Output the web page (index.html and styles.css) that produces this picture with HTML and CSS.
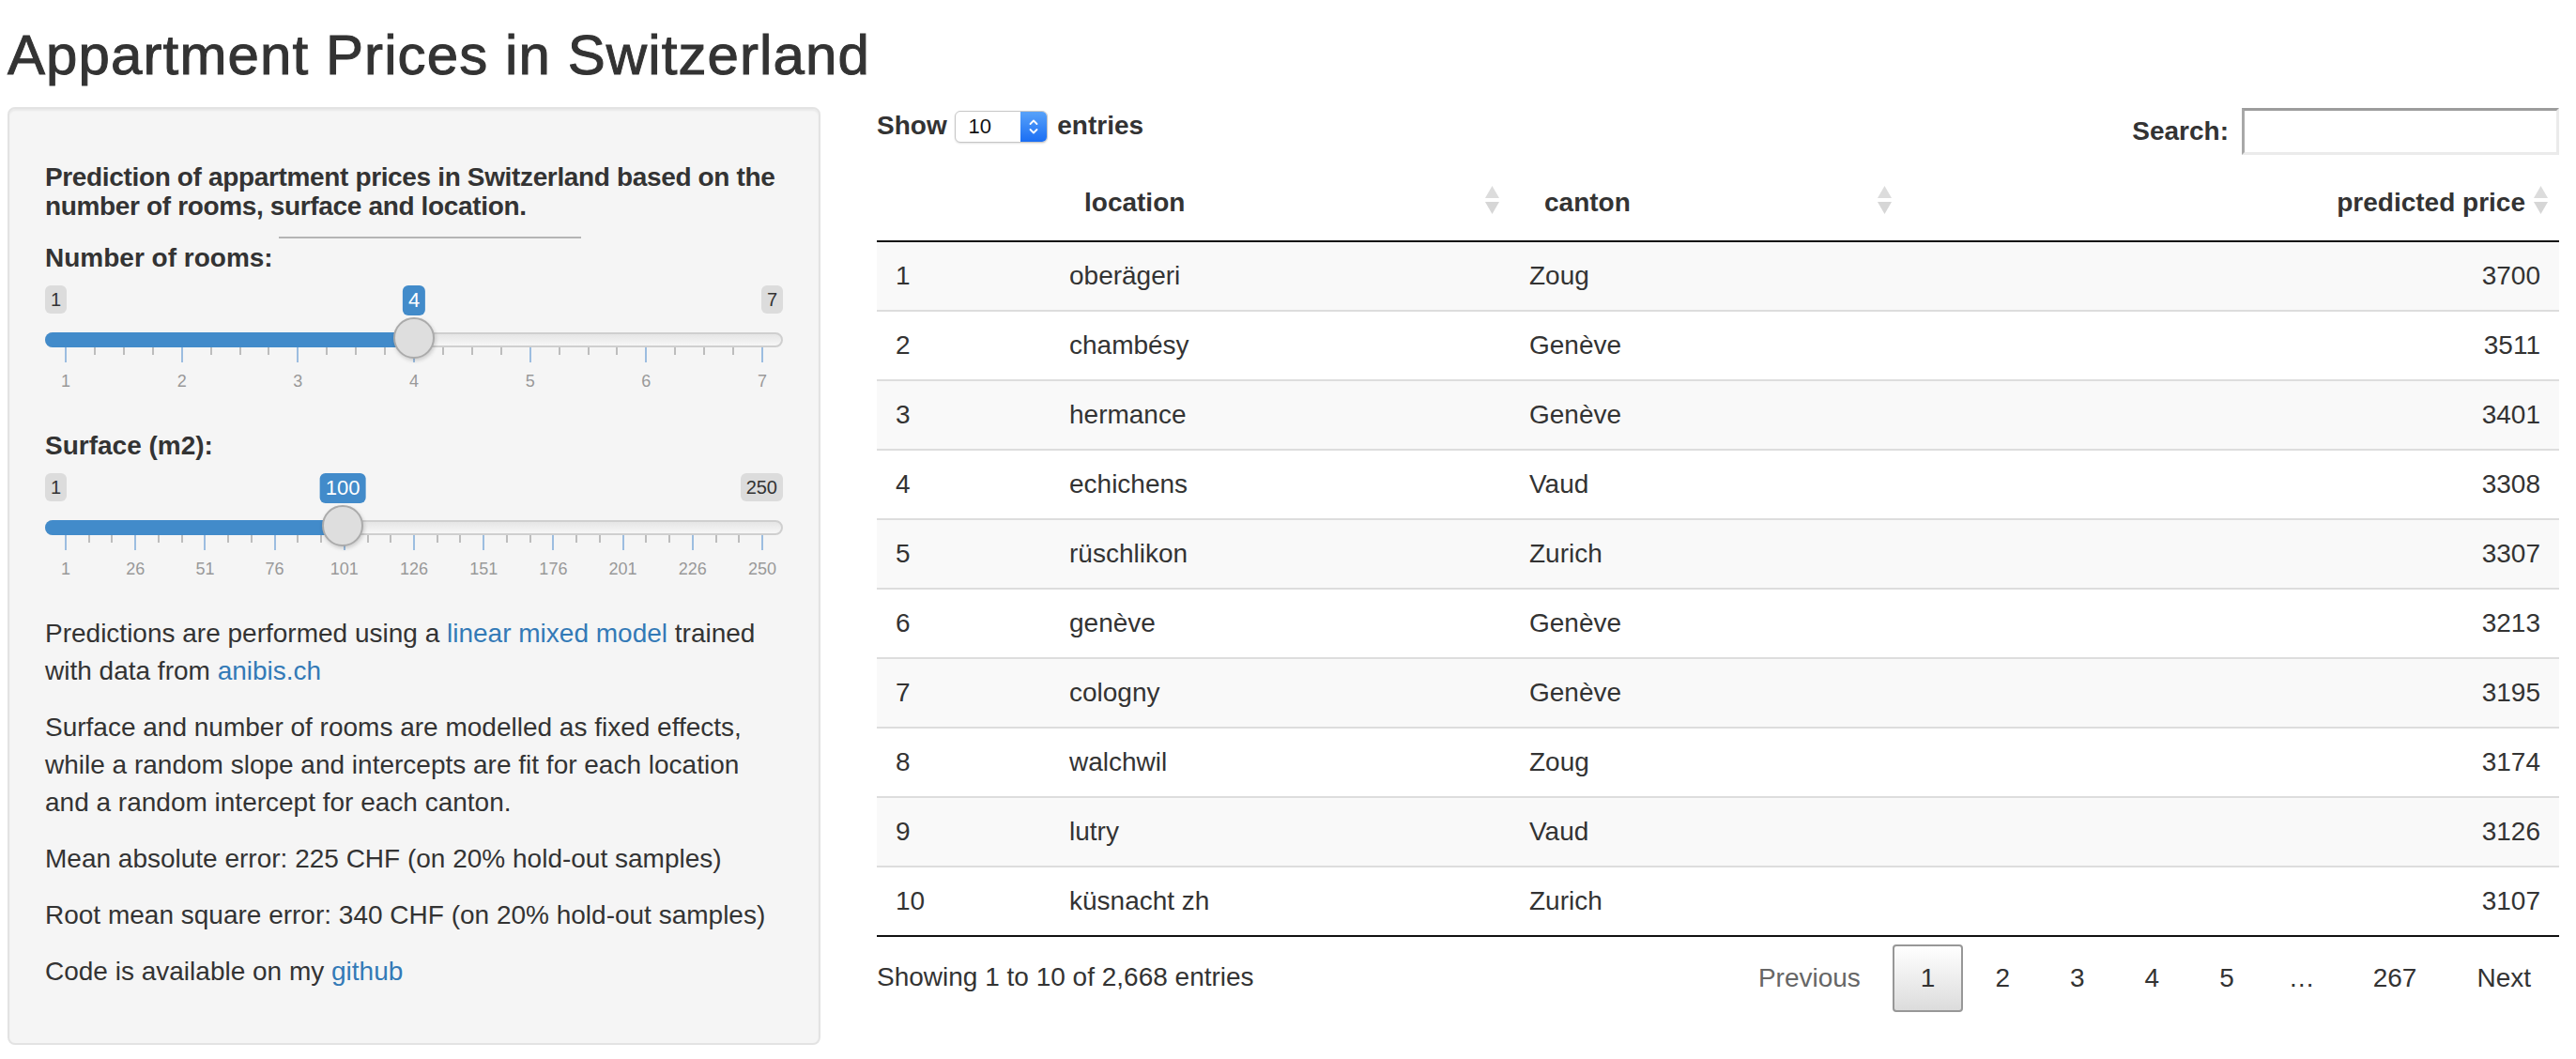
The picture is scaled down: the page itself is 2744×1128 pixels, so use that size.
FILE: index.html
```html
<!DOCTYPE html>
<html lang="en">
<head>
<meta charset="utf-8">
<title>Appartment Prices in Switzerland</title>
<link rel="stylesheet" href="styles.css">
</head>
<body>
<div class="page">
  <h2 class="title">Appartment Prices in Switzerland</h2>
  <div class="layout">
    <aside class="well">
      <h5 class="intro">Prediction of appartment prices in Switzerland based on the number of rooms, surface and location.</h5>
      <hr class="sep">

      <div class="form-group">
        <label class="control-label">Number of rooms:</label>
        <div class="irs" style="--p:0.5">
          <span class="irs-line"></span>
          <span class="irs-bar"></span>
          <span class="irs-min">1</span>
          <span class="irs-max">7</span>
          <span class="irs-single">4</span>
          <div class="irs-grid">
            <span class="tick" style="left:0%"></span>
            <span class="tick small" style="left:4.1667%"></span>
            <span class="tick small" style="left:8.3333%"></span>
            <span class="tick small" style="left:12.5%"></span>
            <span class="tick" style="left:16.6667%"></span>
            <span class="tick small" style="left:20.8333%"></span>
            <span class="tick small" style="left:25%"></span>
            <span class="tick small" style="left:29.1667%"></span>
            <span class="tick" style="left:33.3333%"></span>
            <span class="tick small" style="left:37.5%"></span>
            <span class="tick small" style="left:41.6667%"></span>
            <span class="tick small" style="left:45.8333%"></span>
            <span class="tick" style="left:50%"></span>
            <span class="tick small" style="left:54.1667%"></span>
            <span class="tick small" style="left:58.3333%"></span>
            <span class="tick small" style="left:62.5%"></span>
            <span class="tick" style="left:66.6667%"></span>
            <span class="tick small" style="left:70.8333%"></span>
            <span class="tick small" style="left:75%"></span>
            <span class="tick small" style="left:79.1667%"></span>
            <span class="tick" style="left:83.3333%"></span>
            <span class="tick small" style="left:87.5%"></span>
            <span class="tick small" style="left:91.6667%"></span>
            <span class="tick small" style="left:95.8333%"></span>
            <span class="tick" style="left:100%"></span>
            <span class="grid-text" style="left:0%">1</span>
            <span class="grid-text" style="left:16.6667%">2</span>
            <span class="grid-text" style="left:33.3333%">3</span>
            <span class="grid-text" style="left:50%">4</span>
            <span class="grid-text" style="left:66.6667%">5</span>
            <span class="grid-text" style="left:83.3333%">6</span>
            <span class="grid-text" style="left:100%">7</span>
          </div>
          <span class="irs-handle"></span>
        </div>
      </div>

      <div class="form-group">
        <label class="control-label">Surface (m2):</label>
        <div class="irs" style="--p:0.3976">
          <span class="irs-line"></span>
          <span class="irs-bar"></span>
          <span class="irs-min">1</span>
          <span class="irs-max">250</span>
          <span class="irs-single">100</span>
          <div class="irs-grid">
            <span class="tick" style="left:0%"></span>
            <span class="tick small" style="left:3.3333%"></span>
            <span class="tick small" style="left:6.6667%"></span>
            <span class="tick" style="left:10%"></span>
            <span class="tick small" style="left:13.3333%"></span>
            <span class="tick small" style="left:16.6667%"></span>
            <span class="tick" style="left:20%"></span>
            <span class="tick small" style="left:23.3333%"></span>
            <span class="tick small" style="left:26.6667%"></span>
            <span class="tick" style="left:30%"></span>
            <span class="tick small" style="left:33.3333%"></span>
            <span class="tick small" style="left:36.6667%"></span>
            <span class="tick" style="left:40%"></span>
            <span class="tick small" style="left:43.3333%"></span>
            <span class="tick small" style="left:46.6667%"></span>
            <span class="tick" style="left:50%"></span>
            <span class="tick small" style="left:53.3333%"></span>
            <span class="tick small" style="left:56.6667%"></span>
            <span class="tick" style="left:60%"></span>
            <span class="tick small" style="left:63.3333%"></span>
            <span class="tick small" style="left:66.6667%"></span>
            <span class="tick" style="left:70%"></span>
            <span class="tick small" style="left:73.3333%"></span>
            <span class="tick small" style="left:76.6667%"></span>
            <span class="tick" style="left:80%"></span>
            <span class="tick small" style="left:83.3333%"></span>
            <span class="tick small" style="left:86.6667%"></span>
            <span class="tick" style="left:90%"></span>
            <span class="tick small" style="left:93.3333%"></span>
            <span class="tick small" style="left:96.6667%"></span>
            <span class="tick" style="left:100%"></span>
            <span class="grid-text" style="left:0%">1</span>
            <span class="grid-text" style="left:10%">26</span>
            <span class="grid-text" style="left:20%">51</span>
            <span class="grid-text" style="left:30%">76</span>
            <span class="grid-text" style="left:40%">101</span>
            <span class="grid-text" style="left:50%">126</span>
            <span class="grid-text" style="left:60%">151</span>
            <span class="grid-text" style="left:70%">176</span>
            <span class="grid-text" style="left:80%">201</span>
            <span class="grid-text" style="left:90%">226</span>
            <span class="grid-text" style="left:100%">250</span>
          </div>
          <span class="irs-handle"></span>
        </div>
      </div>

      <p>Predictions are performed using a <a href="#">linear mixed model</a> trained with data from <a href="#">anibis.ch</a></p>
      <p>Surface and number of rooms are modelled as fixed effects, while a random slope and intercepts are fit for each location and a random intercept for each canton.</p>
      <p>Mean absolute error: 225 CHF (on 20% hold-out samples)</p>
      <p>Root mean square error: 340 CHF (on 20% hold-out samples)</p>
      <p>Code is available on my <a href="#">github</a></p>
    </aside>

    <main class="main">
      <div class="dt-top">
        <div class="dt-length">Show <span class="select"><span class="select-val">10</span><span class="select-btn"><svg width="12" height="24" viewBox="0 0 12 24"><path d="M2.5 9 L6 5.5 L9.5 9" fill="none" stroke="#fff" stroke-width="1.8" stroke-linecap="round" stroke-linejoin="round"/><path d="M2.5 15 L6 18.5 L9.5 15" fill="none" stroke="#fff" stroke-width="1.8" stroke-linecap="round" stroke-linejoin="round"/></svg></span></span> entries</div>
        <div class="dt-filter"><span>Search:</span><span class="search-input"></span></div>
      </div>

      <table class="dt">
        <colgroup>
          <col class="c-idx">
          <col class="c-loc">
          <col class="c-canton">
          <col class="c-price">
        </colgroup>
        <thead>
          <tr>
            <th></th>
            <th>location<span class="sort-icon"><svg width="15" height="30" viewBox="0 0 15 30"><path d="M7.5 0 L15 13 L0 13 Z" fill="#dcdcdc"/><path d="M0 17 L15 17 L7.5 30 Z" fill="#d6d6d6"/></svg></span></th>
            <th>canton<span class="sort-icon"><svg width="15" height="30" viewBox="0 0 15 30"><path d="M7.5 0 L15 13 L0 13 Z" fill="#dcdcdc"/><path d="M0 17 L15 17 L7.5 30 Z" fill="#d6d6d6"/></svg></span></th>
            <th class="num">predicted price<span class="sort-icon"><svg width="15" height="30" viewBox="0 0 15 30"><path d="M7.5 0 L15 13 L0 13 Z" fill="#dcdcdc"/><path d="M0 17 L15 17 L7.5 30 Z" fill="#d6d6d6"/></svg></span></th>
          </tr>
        </thead>
        <tbody>
          <tr><td>1</td><td>oberägeri</td><td>Zoug</td><td class="num">3700</td></tr>
          <tr><td>2</td><td>chambésy</td><td>Genève</td><td class="num">3511</td></tr>
          <tr><td>3</td><td>hermance</td><td>Genève</td><td class="num">3401</td></tr>
          <tr><td>4</td><td>echichens</td><td>Vaud</td><td class="num">3308</td></tr>
          <tr><td>5</td><td>rüschlikon</td><td>Zurich</td><td class="num">3307</td></tr>
          <tr><td>6</td><td>genève</td><td>Genève</td><td class="num">3213</td></tr>
          <tr><td>7</td><td>cologny</td><td>Genève</td><td class="num">3195</td></tr>
          <tr><td>8</td><td>walchwil</td><td>Zoug</td><td class="num">3174</td></tr>
          <tr><td>9</td><td>lutry</td><td>Vaud</td><td class="num">3126</td></tr>
          <tr><td>10</td><td>küsnacht zh</td><td>Zurich</td><td class="num">3107</td></tr>
        </tbody>
      </table>

      <div class="dt-bottom">
        <div class="dt-info">Showing 1 to 10 of 2,668 entries</div>
        <div class="dt-paginate">
          <a class="pg disabled">Previous</a>
          <a class="pg current">1</a>
          <a class="pg">2</a>
          <a class="pg">3</a>
          <a class="pg">4</a>
          <a class="pg">5</a>
          <span class="ellipsis">…</span>
          <a class="pg">267</a>
          <a class="pg">Next</a>
        </div>
      </div>
    </main>
  </div>
</div>
</body>
</html>
```

FILE: styles.css
```css
* {
  box-sizing: border-box;
}

body {
  margin: 0;
  background: #fff;
  color: #333;
  font-family: "Liberation Sans", Arial, Helvetica, sans-serif;
  font-size: 28px;
  line-height: 40px;
}

a {
  color: #337ab7;
  text-decoration: none;
}

.page {
  padding: 0 0 0 8px;
}

.title {
  margin: 26px 0 22px;
  font-size: 60px;
  line-height: 66px;
  font-weight: 400;
  letter-spacing: 1.1px;
  -webkit-text-stroke: 1px #333;
  color: #333;
}

.layout {
  display: grid;
  grid-template-columns: 866px 1792px;
  column-gap: 60px;
  align-items: start;
}

/* ---------- sidebar ---------- */
.well {
  background: #f5f5f5;
  border: 2px solid #e3e3e3;
  border-radius: 8px;
  box-shadow: inset 0 2px 2px rgba(0, 0, 0, 0.05);
  padding: 38px;
}

.intro {
  margin: 20px 0 0;
  font-size: 28px;
  line-height: 30.8px;
  font-weight: 700;
  letter-spacing: -0.35px;
}

.sep {
  margin: 16px 0 1px 249px;
  width: 322px;
  height: 0;
  border: 0;
  border-top: 2px solid #b5b5b5;
}

.form-group {
  margin-bottom: 30px;
}

.control-label {
  display: block;
  font-weight: 700;
  line-height: 40px;
  margin-bottom: 9px;
}

.irs {
  position: relative;
  height: 121px;
}

.irs-line {
  position: absolute;
  left: 0;
  right: 0;
  top: 50px;
  height: 16px;
  border: 2px solid #cfcfcf;
  border-radius: 16px;
  background: linear-gradient(to bottom, #dddddd -50%, #ffffff 150%);
}

.irs-bar {
  position: absolute;
  left: 0;
  top: 50px;
  height: 16px;
  width: calc(22px + var(--p) * (100% - 44px));
  background: #428bca;
  border-radius: 16px 0 0 16px;
}

.irs-min,
.irs-max {
  position: absolute;
  top: 0;
  padding: 2px 6px;
  font-size: 20px;
  line-height: 26px;
  color: #333;
  background: rgba(0, 0, 0, 0.1);
  border-radius: 6px;
}

.irs-min {
  left: 0;
}

.irs-max {
  right: 0;
}

.irs-single {
  position: absolute;
  top: 0;
  left: calc(22px + var(--p) * (100% - 44px));
  transform: translateX(-50%);
  padding: 2px 6px;
  font-size: 22px;
  line-height: 28px;
  color: #fff;
  background: #428bca;
  border-radius: 6px;
}

.irs-handle {
  position: absolute;
  top: 34px;
  left: calc(22px + var(--p) * (100% - 44px));
  width: 44px;
  height: 44px;
  margin-left: -22px;
  background: #dedede;
  border: 2px solid #ababab;
  border-radius: 50%;
  box-shadow: 1px 2px 4px rgba(0, 0, 0, 0.18);
}

.irs-grid {
  position: absolute;
  left: 22px;
  right: 22px;
  top: 66px;
  height: 55px;
}

.tick {
  position: absolute;
  top: 0;
  width: 2px;
  height: 16px;
  margin-left: -1px;
  background: #9cbde0;
}

.tick.small {
  height: 8px;
  background: #bdbdbd;
}

.grid-text {
  position: absolute;
  top: 24px;
  transform: translateX(-50%);
  font-size: 18px;
  line-height: 24px;
  color: #999;
}

.well p {
  margin: 0 0 20px;
}

.well p:last-child {
  margin-bottom: 18px;
}

/* ---------- main panel ---------- */
.main {
  min-width: 0;
}

.dt-top {
  display: flex;
  justify-content: space-between;
  align-items: flex-start;
  height: 51px;
}

.dt-length {
  font-weight: 700;
  line-height: 40px;
}

.select {
  display: inline-flex;
  vertical-align: middle;
  width: 99px;
  height: 34px;
  margin: -2px 2px 0 1px;
  background: #fff;
  border: 1px solid #c6c6c6;
  border-radius: 6px;
  box-shadow: 0 1px 2px rgba(0, 0, 0, 0.12);
  overflow: hidden;
  font-weight: 400;
}

.select-val {
  flex: 1;
  padding-left: 13px;
  font-size: 22px;
  line-height: 32px;
  color: #111;
}

.select-btn {
  width: 28px;
  display: flex;
  align-items: center;
  justify-content: center;
  background: linear-gradient(to bottom, #58a2f9, #1a6ef4);
}

.select-btn svg {
  display: block;
}

.dt-filter {
  display: flex;
  align-items: center;
  padding-top: 1px;
  font-weight: 700;
}

.search-input {
  display: block;
  width: 338px;
  height: 50px;
  margin-left: 14px;
  background: #fff;
  border-style: solid;
  border-width: 3px;
  border-color: #9c9c9c #ebebeb #ebebeb #a8a8a8;
}

.dt {
  width: 100%;
  margin-top: 11px;
  border-collapse: separate;
  border-spacing: 0;
  table-layout: fixed;
}

.c-idx {
  width: 185px;
}

.c-loc {
  width: 490px;
}

.c-canton {
  width: 418px;
}

.c-price {
  width: 699px;
}

.dt th {
  position: relative;
  padding: 20px 36px;
  border-bottom: 2px solid #111;
  text-align: left;
  font-weight: 700;
  line-height: 40px;
}

.dt th.num {
  text-align: right;
}

.sort-icon {
  position: absolute;
  right: 12px;
  top: 50%;
  margin-top: -18px;
  width: 15px;
  height: 30px;
}

.sort-icon svg {
  display: block;
}

.dt td {
  padding: 16px 20px;
  border-top: 2px solid #ddd;
  line-height: 40px;
}

.dt tbody tr:first-child td {
  border-top: 0;
}

.dt tbody tr:nth-child(odd) {
  background: #f9f9f9;
}

.dt tbody tr:last-child td {
  border-bottom: 2px solid #111;
}

.dt td.num {
  text-align: right;
}

.dt-bottom {
  display: flex;
  justify-content: space-between;
  align-items: flex-start;
}

.dt-info {
  padding-top: 23px;
}

.dt-paginate {
  display: flex;
  padding-top: 8px;
}

.pg {
  display: block;
  margin-left: 4px;
  padding: 14px 28px;
  border: 2px solid transparent;
  border-radius: 4px;
  color: #333;
  line-height: 40px;
}

.pg.current {
  border-color: #979797;
  background: linear-gradient(to bottom, #ffffff 0%, #dcdcdc 100%);
}

.pg.disabled {
  color: #666;
}

.ellipsis {
  display: block;
  padding: 16px 28px;
  line-height: 40px;
}
```
